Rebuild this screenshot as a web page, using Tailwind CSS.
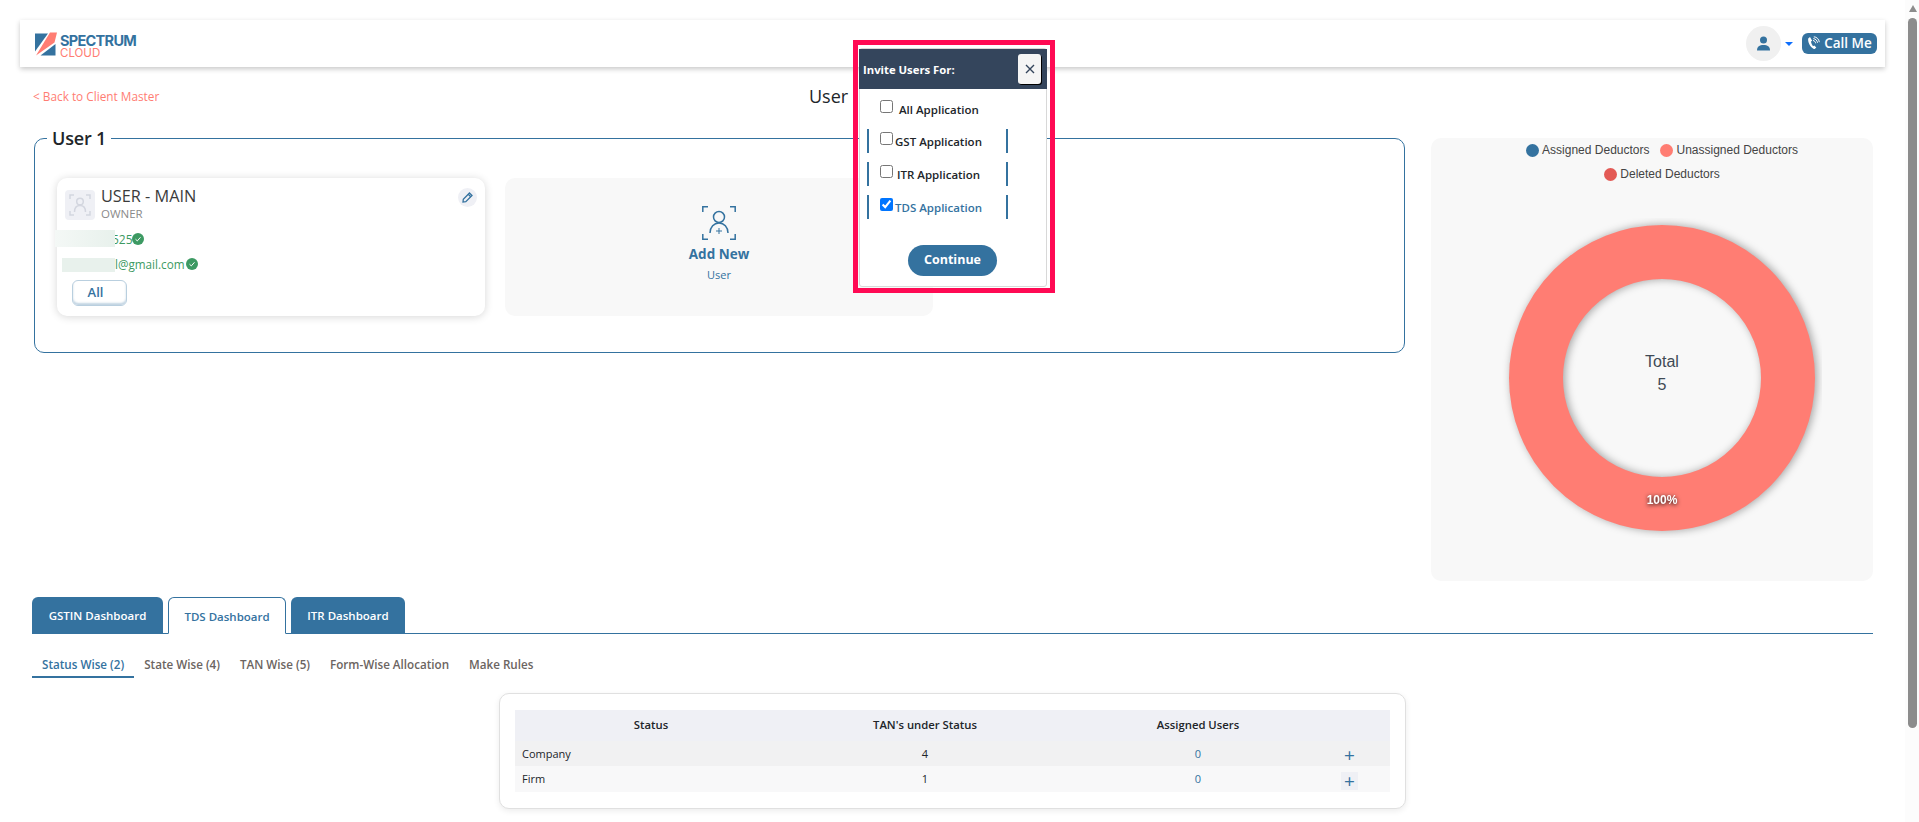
<!DOCTYPE html>
<html lang="en">
<head>
    <meta charset="UTF-8">
    <title>User Management</title>
    <script src="https://cdn.jsdelivr.net/npm/@tailwindcss/browser@4"></script>
</head>
<body class="bg-white font-['Open_Sans',sans-serif] text-[#212529] overflow-hidden">
<div class="flex h-[822px] w-[1919px] relative">
    <!-- page -->
    <div class="w-[1905px] h-[822px] overflow-hidden">
        <!-- top bar -->
        <header class="mt-[20px] ml-[20px] w-[1865px] h-[47px] bg-white shadow-[0_2px_5px_rgba(0,0,0,0.22)] flex items-center pl-[15px] pr-[8px]">
            <svg width="22" height="24" viewBox="0 0 22 24" class="shrink-0">
                <path d="M0 1.500H13L0 19.500Z" fill="#34729f"/>
                <path d="M15 0.500H22L19.500 10.500L1 23.500Z" fill="#ff7d73"/>
                <path d="M20.500 12V23.500H5.500Z" fill="#34729f"/>
            </svg>
            <div class="ml-[3px] mt-[6px] flex flex-col font-['Inter',sans-serif]">
                <span class="text-[14.500px] leading-[14px] font-bold text-[#34729f] tracking-[-0.7px]">SPECTRUM</span>
                <span class="text-[11.500px] leading-[11px] text-[#ff7d73]">CLOUD</span>
            </div>
            <div class="ml-auto w-[35px] h-[35px] rounded-full bg-[#f0f0f0] flex items-center justify-center">
                <svg width="15" height="15" viewBox="0 0 15 15" fill="#34729f">
                    <circle cx="7.500" cy="4" r="3.500"/>
                    <path d="M1 14.500C1 10.500 3.500 9 7.500 9C11.500 9 14 10.500 14 14.500Z"/>
                </svg>
            </div>
            <span class="ml-[4px] w-0 h-0 border-x-[4px] border-x-transparent border-t-[4px] border-t-[#0d6efd]"></span>
            <button class="ml-[9px] w-[75px] h-[21px] rounded-[6px] bg-[#34729f] text-white text-[13.500px] font-semibold flex items-center justify-center gap-[4px] pb-[1px]">
                <svg width="13" height="14" viewBox="0 0 13 14" fill="none">
                    <path d="M3 1L1.200 2.500C0.600 6 3 11 6.800 13C7.800 13.200 8.500 12.500 9.300 11.500L7.300 9.500L6 10.200C5 9 4.200 7.200 4 5.600L5.200 4.800Z" fill="#fff"/>
                    <path d="M6 4.500C7.500 4.700 8.500 5.800 8.600 7.300M6.300 2.600C8.600 2.800 10.300 4.600 10.500 6.800M6.800 0.800C9.800 1 12 3.200 12.300 6.200" stroke="#fff" stroke-width="1"/>
                </svg>
                Call Me
            </button>
        </header>

        <!-- back link and title -->
        <div class="mt-[20px] h-[20px] flex items-center">
            <a class="ml-[33px] w-[776px] text-[11.800px] text-[#ff7d73]">&lt; Back to Client Master</a>
            <h1 class="text-[18px] leading-[20px] font-medium -mt-[3px]">User</h1>
        </div>

        <!-- users and chart -->
        <div class="mt-[19px] pl-[34px] flex h-[455px]">
            <fieldset class="w-[1371px] h-[227px] border border-[#34729f] rounded-[10px] pl-[22px] pt-[28px]">
                <legend class="-ml-[10px] px-[5px] text-[18px] leading-[24px] font-semibold tracking-[-0.2px]">User 1</legend>
                <div class="flex gap-[20px]">
                    <div class="w-[428px] h-[138px] bg-white rounded-[10px] shadow-[0_1px_8px_rgba(0,0,0,0.16)] px-[8px] pt-[12px]">
                        <div class="flex h-[30px]">
                            <div class="w-[30px] h-[30px] rounded-[4px] bg-[#eff0f5] flex items-center justify-center">
                                <svg width="22" height="22" viewBox="0 0 22 22" fill="none" stroke="#d3d6df" stroke-width="1.500">
                                    <path d="M1 5V1H5M17 1H21V5M1 17V21H5M17 21H21V17"/>
                                    <circle cx="11" cy="7.500" r="3.300"/>
                                    <path d="M5.500 18C5.500 13.500 8 11.500 11 11.500C14 11.500 16.500 13.500 16.500 18"/>
                                </svg>
                            </div>
                            <div class="ml-[6px] flex flex-col">
                                <span class="text-[16.300px] leading-[20px] -mt-[4px] text-[#3b3b3b]">USER - MAIN</span>
                                <span class="text-[11.500px] leading-[14px] mt-[1px] text-[#8a8a8a]">OWNER</span>
                            </div>
                            <button class="ml-auto -mt-[2px] w-[19px] h-[19px] rounded-full bg-[#eff0f5] flex items-center justify-center">
                                <svg width="11" height="11" viewBox="0 0 11 11" fill="none" stroke="#34729f" stroke-width="1.300">
                                    <path d="M7.500 1L10 3.500L3.800 9.700L1 10L1.300 7.200Z"/>
                                    <path d="M6.300 2.300L8.700 4.700"/>
                                </svg>
                            </button>
                        </div>
                        <div class="mt-[10px] h-[17px] flex items-center -ml-[10px]">
                            <span class="relative w-[60px] h-[17px] bg-gradient-to-r from-[#f4f8f6] to-[#e8f1ec]"></span>
                            <span class="-ml-[3px] mt-[3px] text-[12px] text-[#3d9a63]">525</span>
                            <svg width="12" height="12" viewBox="0 0 12 12" class="-ml-[1px]">
                                <circle cx="6" cy="6" r="6" fill="#3d9a63"/>
                                <path d="M3.500 6.200L5.300 7.900L8.500 4.300" fill="none" stroke="#fff" stroke-width="1"/>
                            </svg>
                        </div>
                        <div class="mt-[11px] h-[14px] flex items-center -ml-[3px]">
                            <span class="w-[53px] h-[14px] bg-[#e8f1ec]"></span>
                            <span class="text-[11.700px] text-[#3d9a63]">l@gmail.com</span>
                            <svg width="12" height="12" viewBox="0 0 12 12" class="ml-[1px] -mt-[3px]">
                                <circle cx="6" cy="6" r="6" fill="#3d9a63"/>
                                <path d="M3.500 6.200L5.300 7.900L8.500 4.300" fill="none" stroke="#fff" stroke-width="1"/>
                            </svg>
                        </div>
                        <button class="mt-[8px] ml-[7px] w-[55px] h-[26px] rounded-[6px] border border-[#b9cfdf] shadow-[inset_0_-2px_2px_rgba(52,114,159,0.3)] text-[13px] font-semibold text-[#34729f] pr-[8px]">All</button>
                    </div>
                    <div class="w-[428px] h-[138px] bg-[#f8f8f8] rounded-[10px] flex flex-col items-center pt-[28px]">
                        <svg width="34" height="34" viewBox="0 0 34 34" fill="none" stroke="#34729f" stroke-width="1.500">
                            <path d="M0.800 6V0.800H6M28 0.800H33.200V6M0.800 28V33.200H6M28 33.200H33.200V28"/>
                            <circle cx="17" cy="11" r="5.500"/>
                            <path d="M8 27C8 21 12 17 17 17C22 17 26 21 26 27"/>
                            <path d="M17 22V28M14 25H20" stroke-width="1"/>
                        </svg>
                        <span class="mt-[4px] text-[13.500px] leading-[20px] font-bold text-[#34729f]">Add New</span>
                        <span class="mt-[2px] text-[11px] leading-[18px] text-[#34729f]">User</span>
                    </div>
                </div>
            </fieldset>

            <div class="ml-[26px] mt-[12px] w-[442px] h-[443px] bg-[#f8f8f8] rounded-[10px] pl-[20px] flex flex-col items-center font-['Liberation_Sans',sans-serif] text-[12px] text-[#444]">
                <div class="mt-[3px] h-[18px] flex items-center">
                    <span class="w-[13px] h-[13px] rounded-full bg-[#34729f]"></span>
                    <span class="ml-[3px]">Assigned Deductors</span>
                    <span class="ml-[11px] w-[13px] h-[13px] rounded-full bg-[#ff7d73]"></span>
                    <span class="ml-[3px]">Unassigned Deductors</span>
                </div>
                <div class="mt-[6px] h-[18px] flex items-center">
                    <span class="w-[13px] h-[13px] rounded-full bg-[#e35a55]"></span>
                    <span class="ml-[3px]">Deleted Deductors</span>
                </div>
                <svg width="320" height="320" viewBox="0 0 320 320" class="mt-[35px] shrink-0">
                    <circle cx="160" cy="160" r="126" fill="none" stroke="#ff7d73" stroke-width="54" class="drop-shadow-[2px_0px_4px_rgba(0,0,0,0.35)]"/>
                    <text x="160" y="149" text-anchor="middle" font-size="16" fill="#3f4a55">Total</text>
                    <text x="160" y="172" text-anchor="middle" font-size="16" fill="#3f4a55">5</text>
                    <text x="160" y="286" text-anchor="middle" font-size="12" font-weight="700" fill="#fff" class="drop-shadow-[0px_1px_2px_rgba(0,0,0,0.9)]">100%</text>
                </svg>
            </div>
        </div>

        <!-- dashboard tabs -->
        <div class="mt-[17px] ml-[32px] w-[1841px] h-[36px] flex items-end gap-[5px] border-b border-[#34729f] text-[11.500px] font-semibold">
            <button class="w-[131px] h-[36px] pt-[2px] rounded-t-[6px] bg-[#34729f] text-white">GSTIN Dashboard</button>
            <button class="w-[118px] h-[37px] pt-[2px] -mb-px rounded-t-[6px] bg-white border border-[#34729f] border-b-white text-[#34729f]">TDS Dashboard</button>
            <button class="w-[114px] h-[36px] pt-[2px] rounded-t-[6px] bg-[#34729f] text-white">ITR Dashboard</button>
        </div>
        <div class="mt-[16px] ml-[32px] flex h-[28px] text-[11.650px] font-semibold text-[#6b6461]">
            <a class="px-[10px] pt-[1px] leading-[28px] border-b-2 border-[#34729f] text-[#34729f]">Status Wise (2)</a>
            <a class="px-[10px] pt-[1px] leading-[28px]">State Wise (4)</a>
            <a class="px-[10px] pt-[1px] leading-[28px]">TAN Wise (5)</a>
            <a class="px-[10px] pt-[1px] leading-[28px]">Form-Wise Allocation</a>
            <a class="px-[10px] pt-[1px] leading-[28px]">Make Rules</a>
        </div>

        <!-- status table -->
        <div class="mt-[15px] ml-[499px] w-[907px] h-[116px] bg-white rounded-[10px] border border-[#e0e0e0] shadow-[0_2px_6px_rgba(0,0,0,0.08)] px-[15px] pt-[16px]">
            <table class="w-[875px] table-fixed text-[11px]">
                <thead>
                    <tr class="h-[31px] bg-[#eff0f5] text-[11.300px]">
                        <th class="w-[272px] font-semibold">Status</th>
                        <th class="w-[276px] font-semibold">TAN's under Status</th>
                        <th class="w-[270px] font-semibold">Assigned Users</th>
                        <th></th>
                    </tr>
                </thead>
                <tbody class="text-center">
                    <tr class="h-[25px] bg-[#f1f1f2]">
                        <td class="text-left pl-[7px] pt-[2px]">Company</td>
                        <td class="pt-[2px]">4</td>
                        <td class="pt-[2px] text-[#34729f]">0</td>
                        <td class="text-left pl-[8px]"><button class="block w-[17px] h-[18px] mt-[3px] text-[19px] leading-[18px] text-[#34729f]">+</button></td>
                    </tr>
                    <tr class="h-[26px] bg-[#f8f8f9]">
                        <td class="text-left pl-[7px]">Firm</td>
                        <td>1</td>
                        <td class="text-[#34729f]">0</td>
                        <td class="text-left pl-[8px]"><button class="block w-[17px] h-[18px] mt-[3px] bg-[#eff0f5] text-[19px] leading-[18px] text-[#34729f]">+</button></td>
                    </tr>
                </tbody>
            </table>
        </div>
    </div>

    <!-- scrollbar -->
    <div class="w-[14px] h-[822px] bg-[#fcfcfc] pl-[3px] pt-[5px]">
        <div class="w-0 h-0 ml-[1px] border-x-[4px] border-x-transparent border-b-[7px] border-b-[#8c8c8c]"></div>
        <div class="mt-[6px] w-[9px] h-[710px] rounded-full bg-[#8c8c8c]"></div>
    </div>

    <!-- invite popup with highlight frame -->
    <div class="absolute left-[853px] top-[40px] w-[202px] h-[253px] border-[5px] border-[#ff0a54] pl-[1px] pr-[3px] pt-[3px] pb-[1px]">
        <div class="h-full bg-white border border-[#d8d8d8] rounded-[3px] text-[11.500px] font-semibold">
            <div class="-mx-px h-[40px] bg-[#34455c] flex items-center pl-[4px] pr-[6px] text-white text-[11.300px] font-bold">
                <span class="mt-[2px]">Invite Users For:</span>
                <button class="ml-auto w-[23px] h-[30px] rounded-[3px] bg-[#f5f5f5] shadow-[1px_1px_0_#000] text-[#34455c] flex items-center justify-center">
                    <svg width="10" height="10" viewBox="0 0 10 10" stroke="#34455c" stroke-width="1.400"><path d="M1 1L9 9M9 1L1 9"/></svg>
                </button>
            </div>
            <div class="mt-[7px] flex flex-col gap-[9px]">
                <label class="ml-[7px] w-[141px] h-[24px] border-x-2 border-transparent pl-[11px] flex items-center">
                    <input type="checkbox" class="w-[13px] h-[13px] m-0 -mt-[3px]">
                    <span class="ml-[6px] mt-[3px]">All Application</span>
                </label>
                <label class="ml-[7px] w-[141px] h-[24px] border-x-2 border-[#34729f] pl-[11px] flex items-center">
                    <input type="checkbox" class="w-[13px] h-[13px] m-0 -mt-[5px]">
                    <span class="ml-[2px] mt-[2px]">GST Application</span>
                </label>
                <label class="ml-[7px] w-[141px] h-[24px] border-x-2 border-[#34729f] pl-[11px] flex items-center">
                    <input type="checkbox" class="w-[13px] h-[13px] m-0 -mt-[5px]">
                    <span class="ml-[4px] mt-[2px]">ITR Application</span>
                </label>
                <label class="ml-[7px] w-[141px] h-[24px] border-x-2 border-[#34729f] pl-[11px] flex items-center text-[#34729f]">
                    <input type="checkbox" checked class="w-[13px] h-[13px] m-0 -mt-[5px]">
                    <span class="ml-[2px] mt-[2px]">TDS Application</span>
                </label>
            </div>
            <button class="mt-[26px] ml-[48px] w-[89px] h-[31px] rounded-full bg-[#34729f] text-white text-[12.500px] font-bold">Continue</button>
        </div>
    </div>
</div>
</body>
</html>
